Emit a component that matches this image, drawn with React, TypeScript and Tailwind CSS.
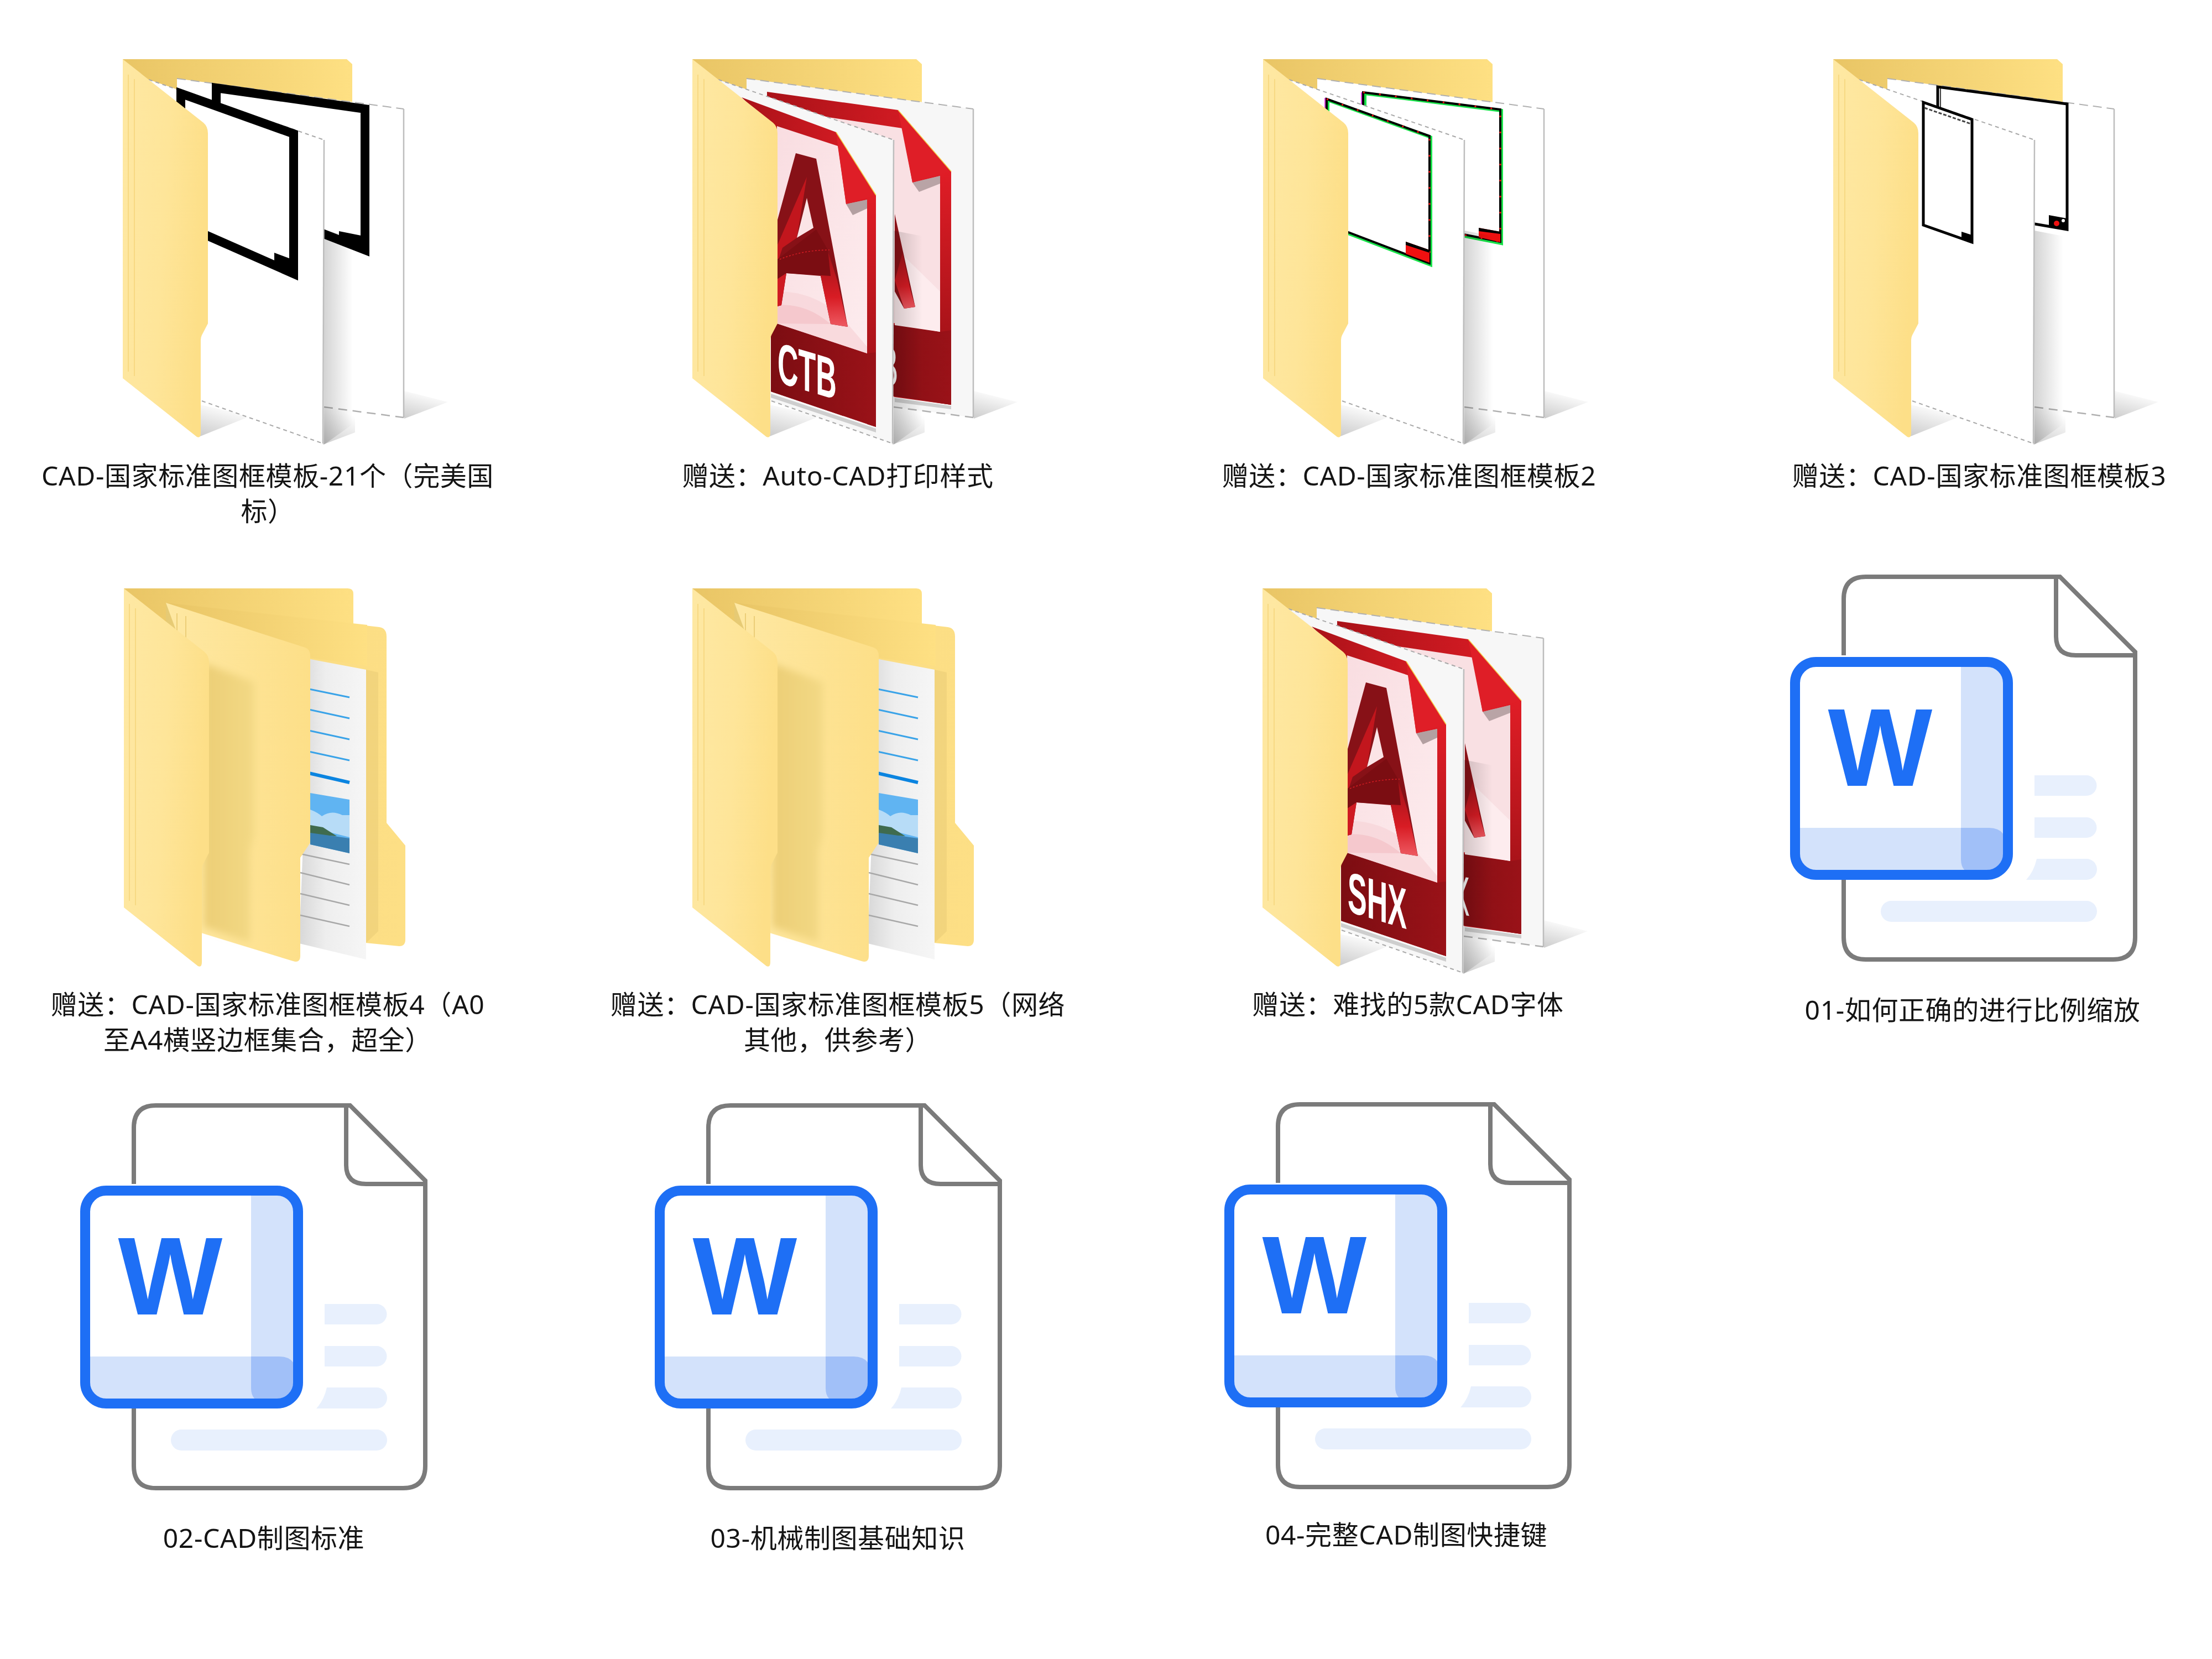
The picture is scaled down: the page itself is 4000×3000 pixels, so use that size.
import React from "react";

const fontStack = "font-['Noto_Sans','Noto_Sans_CJK_SC',sans-serif]";

// shared gradients, everything else in the icons refers to these ids
function Defs() {
  return (
    <svg width="0" height="0" className="block">
      <defs>
        <filter id="soft" x="-20%" y="-20%" width="140%" height="140%">
          <feGaussianBlur stdDeviation="7" />
        </filter>
        <linearGradient id="flap" x1="0" y1="0" x2="1" y2="0.25">
          <stop offset="0" stopColor="#fee8a3" />
          <stop offset="0.55" stopColor="#fee599" />
          <stop offset="1" stopColor="#fddf88" />
        </linearGradient>
        <linearGradient id="back" x1="0" y1="0" x2="1" y2="0">
          <stop offset="0" stopColor="#e9c565" />
          <stop offset="1" stopColor="#fee083" />
        </linearGradient>
        <linearGradient id="flap2" x1="0" y1="0" x2="1" y2="0">
          <stop offset="0" stopColor="#fee8a3" />
          <stop offset="1" stopColor="#fddf88" />
        </linearGradient>
        <linearGradient id="flapShade" x1="0" y1="0" x2="1" y2="0">
          <stop offset="0" stopColor="#ecce76" />
          <stop offset="1" stopColor="#f3d985" />
        </linearGradient>
        <linearGradient id="side" x1="0" y1="0" x2="1" y2="0">
          <stop offset="0" stopColor="#000000" stopOpacity="0.17" />
          <stop offset="1" stopColor="#000000" stopOpacity="0" />
        </linearGradient>
        <linearGradient id="wedge" x1="0" y1="1" x2="0.4" y2="0">
          <stop offset="0" stopColor="#000000" stopOpacity="0.2" />
          <stop offset="1" stopColor="#000000" stopOpacity="0" />
        </linearGradient>
        <linearGradient id="sheet" x1="0" y1="0" x2="1" y2="0">
          <stop offset="0" stopColor="#d8d8d8" />
          <stop offset="0.4" stopColor="#eeeeee" />
          <stop offset="1" stopColor="#f6f6f6" />
        </linearGradient>
        <linearGradient id="panelEdge" x1="0" y1="0" x2="1" y2="0">
          <stop offset="0" stopColor="#e6ca74" />
          <stop offset="0.5" stopColor="#fadc84" />
          <stop offset="1" stopColor="#fddf85" />
        </linearGradient>
        <linearGradient id="redTop" x1="0" y1="0" x2="1" y2="0">
          <stop offset="0" stopColor="#a91218" />
          <stop offset="1" stopColor="#df1d26" />
        </linearGradient>
        <linearGradient id="redSide" x1="0" y1="0" x2="0" y2="1">
          <stop offset="0" stopColor="#e01d26" />
          <stop offset="0.7" stopColor="#a81319" />
          <stop offset="1" stopColor="#8c1016" />
        </linearGradient>
        <linearGradient id="pink" x1="0" y1="0" x2="1" y2="1">
          <stop offset="0" stopColor="#f9dde1" />
          <stop offset="1" stopColor="#fdecee" />
        </linearGradient>
        <linearGradient id="leg" x1="0" y1="0" x2="0" y2="1">
          <stop offset="0" stopColor="#a01218" />
          <stop offset="0.6" stopColor="#d81c24" />
          <stop offset="1" stopColor="#ee5a62" />
        </linearGradient>
        <linearGradient id="band" x1="0" y1="0" x2="1" y2="0">
          <stop offset="0" stopColor="#7c0d12" />
          <stop offset="1" stopColor="#9a1218" />
        </linearGradient>
      </defs>
    </svg>
  );
}

// the open windows explorer folder, anything passed goes on its two sheets
function Folder({
  sheet = "#ffffff",
  backSheet,
  frontSheet,
}: {
  sheet?: string;
  backSheet?: React.ReactNode;
  frontSheet?: React.ReactNode;
}) {
  return (
    <svg width="600" height="700" viewBox="0 0 600 700" className="block blur-[0.5px]">
      <polygon points="509,600 588,620 509,650" fill="url(#wedge)" />
      <polygon points="362,630 420,630 420,675 362,697" fill="url(#wedge)" />
      <polygon points="140,625 232,645 140,682" fill="url(#wedge)" />
      <path d="M0 0H405L415 9V90H0Z" fill="url(#back)" />
      <polygon points="98,35 508,90 508,648 364,629 98,600" fill={sheet} />
      <path d="M98 35L508 90" stroke="#b0b0b0" strokeWidth="2" strokeDasharray="16 9" fill="none" />
      <path d="M508 90V648" stroke="#bdbdbd" strokeWidth="2.5" fill="none" />
      <path d="M364 629L508 648" stroke="#b0b0b0" strokeWidth="2.5" strokeDasharray="16 10" fill="none" />
      {backSheet}
      <polygon points="364,310 416,320 416,660 364,697" fill="url(#side)" />
      <polygon points="47,37 364,146 362,695 143,618 47,500" fill={sheet} />
      <path d="M47 37L364 146" stroke="#a8a8a8" strokeWidth="2" strokeDasharray="7 6" fill="none" />
      <path d="M364 146L362 695" stroke="#bdbdbd" strokeWidth="2.5" fill="none" />
      <path d="M143 618L362 695" stroke="#a8a8a8" strokeWidth="2" strokeDasharray="7 6" fill="none" />
      {frontSheet}
      <FrontFlap />
    </svg>
  );
}

function FrontFlap() {
  return (
    <g>
      <path
        d="M0 0L146 115Q154 122 154 134V478L143 499Q141 503 141 508V676Q141 686 134 683L0 577Z"
        fill="url(#flap)"
      />
      <path d="M10 28V565M21 36V573" stroke="#f7d983" strokeWidth="2" fill="none" />
    </g>
  );
}

function Frame({
  points,
  width,
  color = "#000000",
}: {
  points: string;
  width: number;
  color?: string;
}) {
  return <polygon points={points} fill="none" stroke={color} strokeWidth={width} strokeLinejoin="miter" />;
}

// the A of the autocad file icon, front sheet version
function CadFront({ ext }: { ext: string }) {
  return (
    <g>
      <polygon points="89,69 260,132 332,246 332,665 142,601 142,120" fill="url(#redTop)" />
      <polygon points="316,250 332,246 332,665 316,660" fill="url(#redSide)" />
      <polygon points="142,470 316,532 332,530 332,665 142,601" fill="url(#band)" />
      <polygon points="153,121 263,157 278,262 316,254 316,532 153,478" fill="url(#pink)" />
      <path d="M153 420Q230 420 280 478L316 520V532L153 478Z" fill="#f8d6da" opacity="0.8" />
      <path d="M153 445Q205 440 250 479L153 478Z" fill="#f5c8cd" />
      <polygon points="187,170 224,180 281,484 250,479 232,392 170,387 161,445 150,448 150,305" fill="#871117" />
      <polygon points="232,392 250,479 281,484 262,400 246,350" fill="url(#leg)" />
      <polygon points="150,390 170,387 161,445 150,448" fill="#cf1a22" />
      <polygon points="207,213 189,323 163,341 150,380 150,345" fill="#c2161d" />
      <polygon points="150,365 224,308 245,345 250,392 170,387 150,400" fill="#7b0d12" />
      <polygon points="207,251 219,305 189,323" fill="#fbe4e6" />
      <path d="M158 362Q200 345 248 345" stroke="#d81c24" strokeWidth="1.5" strokeDasharray="3 3" fill="none" />
      <polygon points="262,150 278,262 290,282 316,270 316,254 278,262" fill="#5a4a4a" opacity="0.45" />
      <polygon points="260,132 332,246 278,262" fill="#df1e27" />
      <path d="M260 132L332 246" stroke="#f6d24c" strokeWidth="1.5" fill="none" />
      <text
        transform="matrix(0.5,0.15,0,1,154,584)"
        className="font-['Liberation_Sans',sans-serif]"
        fontSize="104"
        fontWeight="700"
        fill="#ffffff"
      >
        {ext}
      </text>
      <polygon points="142,605 332,668 332,675 142,612" fill="#555555" opacity="0.25" />
    </g>
  );
}

// what shows of the second autocad file behind the front sheet
function CadBack({ ext }: { ext: string }) {
  return (
    <g>
      <polygon points="135,59 372,92 468,203 468,625 366,611 135,500" fill="url(#redTop)" />
      <polygon points="448,205 468,203 468,625 448,622" fill="url(#redSide)" />
      <polygon points="300,470 448,493 468,490 468,625 300,600" fill="url(#band)" />
      <polygon points="200,98 380,125 398,223 448,211 448,493 300,465" fill="#f9e0e3" />
      <path d="M366 340L448 420V493L366 481Z" fill="#fdecee" />
      <polygon points="366,280 403,448 383,451 366,420" fill="#8b1117" />
      <polygon points="366,400 383,451 403,448 395,420 380,350" fill="url(#leg)" />
      <polygon points="375,100 398,223 410,240 448,225 448,211 398,223" fill="#5a4a4a" opacity="0.4" />
      <polygon points="372,92 468,203 398,223" fill="#df1e27" />
      <path d="M372 92L468 203" stroke="#f6d24c" strokeWidth="1.5" fill="none" />
      <text
        transform="matrix(0.5,0.07,0,1,272,578)"
        className="font-['Liberation_Sans',sans-serif]"
        fontSize="100"
        fill="#ffffff"
      >
        {ext}
      </text>
      <polygon points="366,613 468,627 468,633 366,620" fill="#555555" opacity="0.25" />
    </g>
  );
}

function StackedFolder() {
  const blue = [
    [181, 197, 3],
    [218, 235, 3],
    [256, 273, 3],
    [294, 311, 3],
    [333, 351, 6],
  ];
  const grey = [
    [480, 499],
    [514, 536],
    [552, 573],
    [591, 611],
  ];
  return (
    <svg width="600" height="700" viewBox="0 0 600 700" className="block blur-[0.5px]">
      <path d="M0 0H405Q415 0 415 10V80H0Z" fill="url(#back)" />
      <path
        d="M76 26L462 70Q475 72 475 87V424L509 465V635Q509 647 498 647L437 641V200L76 120Z"
        fill="url(#panelEdge)"
      />
      <polygon points="76,26 440,66 440,140 150,100" fill="url(#back)" />
      <polygon points="337,128 438,147 438,671 317,642" fill="url(#sheet)" />
      <polygon points="438,147 460,152 460,620 438,641" fill="#e9cc76" opacity="0.55" />
      {blue.map(([a, b, w]) => (
        <line key={a} x1="330" y1={a} x2="408" y2={b} stroke={w > 3 ? "#0a84e0" : "#3aa3e8"} strokeWidth={w} />
      ))}
      <polygon points="337,370 408,382 408,479 337,463" fill="#60b4f2" />
      <path d="M337 400Q350 405 358 412Q375 400 395 410L408 410V450L337 432Z" fill="#b7dcf7" />
      <polygon points="337,428 360,432 385,448 337,445" fill="#3f6b4e" />
      <polygon points="337,442 408,452 408,479 337,463" fill="#3a7fb0" />
      {grey.map(([a, b]) => (
        <line key={a} x1="319" y1={a} x2="408" y2={b} stroke="#a8a8a8" strokeWidth="2.5" />
      ))}
      <path
        d="M76 26L328 107Q337 110 337 122V460L319 487V665Q319 678 306 674L140 623V200Z"
        fill="url(#flap2)"
      />
      {/* shadow the front flap throws on the second one */}
      <polygon points="145,135 236,170 236,445 228,475 228,640 145,612" fill="url(#flapShade)" filter="url(#soft)" />
      <path d="M96 45V130M112 50V130" stroke="#ecce78" strokeWidth="2" fill="none" />
      <FrontFlap />
    </svg>
  );
}

function WordDoc() {
  return (
    <svg width="640" height="700" viewBox="0 0 640 700" className="block blur-[0.4px]">
      <defs>
        <clipPath id="boxInner">
          <rect x="18" y="167" width="367" height="367" rx="28" />
        </clipPath>
      </defs>
      <path
        d="M97 146V44Q97 4 137 4H488L624 140V656Q624 696 584 696H137Q97 696 97 656V540"
        fill="#ffffff"
        stroke="#7b7b7b"
        strokeWidth="8"
      />
      <path d="M481 4V112Q481 146 517 146H624" fill="none" stroke="#7b7b7b" strokeWidth="8" />
      <path d="M442 363H536A18.500 18.500 0 0 1 536 400H442Z" fill="#e8f0fd" />
      <path d="M442 439H536A18.500 18.500 0 0 1 536 476H442Z" fill="#e8f0fd" />
      <path d="M446 514H536A19 19 0 0 1 536 552H427Q441 537 446 514Z" fill="#e8f0fd" />
      <rect x="164" y="590" width="391" height="38" rx="19" fill="#e8f0fd" />
      <rect x="9" y="158" width="385" height="385" rx="38" fill="#ffffff" />
      <g clipPath="url(#boxInner)">
        <rect x="309" y="160" width="80" height="380" fill="#d3e2fb" />
        <path d="M10 458H360Q385 458 390 480V540H10Z" fill="#d3e2fb" />
        <path d="M309 458H360Q385 458 390 480V540H325Q309 535 309 515Z" fill="#a1c0f8" />
      </g>
      <rect x="9" y="158" width="385" height="385" rx="38" fill="none" stroke="#1e6ff5" strokeWidth="18" />
      <text
        x="163"
        y="382"
        textAnchor="middle"
        fontSize="200"
        fontWeight="700"
        fill="#1e6ff5"
        className="font-['Liberation_Sans',sans-serif]"
      >
        W
      </text>
    </svg>
  );
}

function Label({ className, children }: { className: string; children: React.ReactNode }) {
  return (
    <div
      className={`mx-auto max-w-[826px] text-center text-[48px] leading-[64px] tracking-[0.6px] text-[#141414] blur-[0.4px] ${className}`}
    >
      {children}
    </div>
  );
}

export default function App() {
  return (
    <div className={`min-h-[3000px] w-[4000px] bg-white pt-[107px] pl-[64px] ${fontStack}`}>
      <Defs />
      <div className="grid grid-cols-[repeat(4,840px)] grid-rows-[932px_956px_auto] gap-x-[191px]">
        {/* first row */}
        <div>
          <div className="ml-[158px]">
            <Folder
              backSheet={
                <g>
                  <Frame points="169,52 438,90 438,345 169,240" width="16" />
                  <polygon points="391,311 446,322 446,355 391,333" />
                </g>
              }
              frontSheet={
                <g>
                  <Frame points="105,62 309,135 309,388 105,298" width="16" />
                  <polygon points="274,350 317,366 317,398 274,380" />
                </g>
              }
            />
          </div>
          <Label className="mt-[21px]">CAD-国家标准图框模板-21个（完美国标）</Label>
        </div>
        <div>
          <div className="ml-[157px]">
            <Folder sheet="#f7f7f7" backSheet={<CadBack ext="CTB" />} frontSheet={<CadFront ext="CTB" />} />
          </div>
          <Label className="mt-[21px]">赠送：Auto-CAD打印样式</Label>
        </div>
        <div>
          <div className="ml-[158px]">
            <Folder
              backSheet={
                <g>
                  <Frame points="184,62 431,93 431,333 184,284" width="6" color="#19e24a" />
                  <Frame points="181,60 429,91 429,330 181,281" width="4" />
                  <polyline
                    points="181,60 429,91 429,330 365,318"
                    fill="none"
                    stroke="#f01010"
                    strokeWidth="3"
                    strokeDasharray="3 26"
                  />
                  <line x1="178" y1="60" x2="178" y2="82" stroke="#e040e0" strokeWidth="2" />
                  <polygon points="390,305 429,312 429,331 390,322" fill="#f01010" />
                  <polygon points="390,305 429,312 429,316 390,311" />
                </g>
              }
              frontSheet={
                <g>
                  <Frame points="117,74 303,141 303,372 117,301" width="6" color="#19e24a" />
                  <Frame points="115,72 301,139 301,369 115,298" width="4" />
                  <polyline
                    points="115,72 301,139 301,369"
                    fill="none"
                    stroke="#f01010"
                    strokeWidth="3"
                    strokeDasharray="3 26"
                  />
                  <line x1="112" y1="70" x2="112" y2="92" stroke="#e040e0" strokeWidth="2" />
                  <polygon points="258,330 301,345 301,368 258,352" fill="#f01010" />
                  <polygon points="258,330 301,345 301,350 258,336" />
                </g>
              }
            />
          </div>
          <Label className="mt-[21px] pl-[4px]">赠送：CAD-国家标准图框模板2</Label>
        </div>
        <div>
          <div className="ml-[158px]">
            <Folder
              backSheet={
                <g>
                  <Frame points="189,50 423,81 423,308 189,268" width="5" />
                  <line x1="194" y1="50" x2="194" y2="88" stroke="#000000" strokeWidth="1.5" />
                  <polygon points="390,282 423,288 423,308 390,302" />
                  <circle cx="404" cy="297" r="5" fill="#f01010" />
                  <circle cx="416" cy="292" r="3" fill="#ffffff" />
                </g>
              }
              frontSheet={
                <g>
                  <Frame points="163,78 251,109 251,331 163,300" width="5" />
                  <line x1="165" y1="88" x2="249" y2="117" stroke="#444444" strokeWidth="3" strokeDasharray="6 3" />
                  <polygon points="232,312 251,318 251,331 232,324" />
                </g>
              }
            />
          </div>
          <Label className="mt-[21px] pl-[4px]">赠送：CAD-国家标准图框模板3</Label>
        </div>

        {/* second row */}
        <div className="pt-[25px]">
          <div className="ml-[160px]">
            <StackedFolder />
          </div>
          <Label className="mt-[20px]">赠送：CAD-国家标准图框模板4（A0至A4横竖边框集合，超全）</Label>
        </div>
        <div className="pt-[25px]">
          <div className="ml-[157px]">
            <StackedFolder />
          </div>
          <Label className="mt-[20px]">赠送：CAD-国家标准图框模板5（网络其他，供参考）</Label>
        </div>
        <div className="pt-[25px]">
          <div className="ml-[157px]">
            <Folder sheet="#f7f7f7" backSheet={<CadBack ext="SHX" />} frontSheet={<CadFront ext="SHX" />} />
          </div>
          <Label className="mt-[20px]">赠送：难找的5款CAD字体</Label>
        </div>
        <div>
          <div className="ml-[80px]">
            <WordDoc />
          </div>
          <Label className="mt-[55px] pr-[20px]">01-如何正确的进行比例缩放</Label>
        </div>

        {/* third row */}
        <div>
          <div className="ml-[81px]">
            <WordDoc />
          </div>
          <Label className="mt-[54px] pr-[14px]">02-CAD制图标准</Label>
        </div>
        <div>
          <div className="ml-[89px]">
            <WordDoc />
          </div>
          <Label className="mt-[54px]">03-机械制图基础知识</Label>
        </div>
        <div className="-mt-[2px]">
          <div className="ml-[88px]">
            <WordDoc />
          </div>
          <Label className="mt-[50px] pr-[6px]">04-完整CAD制图快捷键</Label>
        </div>
      </div>
    </div>
  );
}
